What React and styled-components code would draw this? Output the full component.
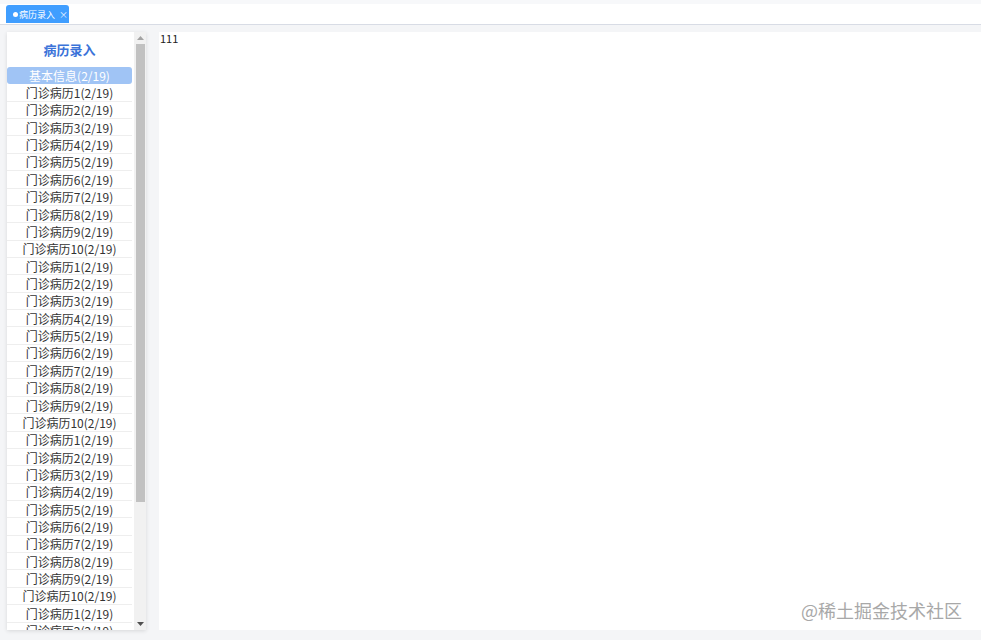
import React from 'react';
import styled, { createGlobalStyle } from 'styled-components';

const GlobalStyle = createGlobalStyle`
  html, body {
    margin: 0;
    padding: 0;
    background: #fff;
    font-family: "Noto Sans CJK SC", "Noto Sans", sans-serif;
  }
`;

const Page = styled.div`
  width: 981px;
  height: 640px;
  position: relative;
  overflow: hidden;
  display: flex;
  flex-direction: column;
`;

const TabBar = styled.div`
  height: 25px;
  box-sizing: border-box;
  padding: 1px 0 0 6px;
  border-top: 4px solid #f7f8fa;
  border-bottom: 1px solid #d8dce5;
  display: flex;
  align-items: flex-start;
  flex-shrink: 0;
`;

const Tab = styled.div`
  height: 18px;
  width: 63px;
  box-sizing: border-box;
  background: #409eff;
  color: #fff;
  border-radius: 3px 3px 0 0;
  display: flex;
  align-items: center;
  gap: 1px;
  padding-left: 7px;
  font-size: 9px;
  line-height: 1;
  white-space: nowrap;
  overflow: hidden;
`;

const Dot = styled.span`
  width: 5px;
  height: 5px;
  border-radius: 50%;
  background: #fff;
  flex-shrink: 0;
`;

const Close = styled.span`
  margin-left: 3px;
  font-size: 9px;
  opacity: 0.9;
`;

const Body = styled.div`
  flex: 1;
  background: #f4f5f7;
  display: flex;
  gap: 13px;
  padding: 7px 0 10px 7px;
  min-height: 0;
`;

const Sidebar = styled.div`
  width: 139px;
  background: #fff;
  box-shadow: 0 1px 4px rgba(0, 0, 0, 0.12);
  display: flex;
  overflow: hidden;
`;

const SideInner = styled.div`
  flex: 1;
  display: flex;
  flex-direction: column;
  overflow: hidden;
`;

const Title = styled.div`
  height: 34px;
  padding-bottom: 1px;
  display: flex;
  align-items: center;
  justify-content: center;
  color: #3b73d9;
  font-size: 13px;
  font-weight: 700;
  flex-shrink: 0;
`;

const List = styled.div`
  display: flex;
  flex-direction: column;
`;

const Item = styled.div`
  height: 17.36px;
  box-sizing: border-box;
  flex-shrink: 0;
  display: flex;
  align-items: center;
  justify-content: center;
  font-size: 12px;
  color: ${(p) => (p.$active ? '#fff' : '#333')};
  background: ${(p) => (p.$active ? '#a0c4f5' : 'transparent')};
  border-radius: ${(p) => (p.$active ? '3px' : '0')};
  border-bottom: 1px solid ${(p) => (p.$active ? 'transparent' : '#eeeeee')};
  white-space: nowrap;
`;

const ScrollTrack = styled.div`
  width: 12px;
  margin-left: 2px;
  background: #f1f1f1;
  display: flex;
  flex-direction: column;
  align-items: center;
  flex-shrink: 0;
`;

const Arrow = styled.div`
  height: 12px;
  width: 12px;
  display: flex;
  align-items: center;
  justify-content: center;
  flex-shrink: 0;
`;

const Thumb = styled.div`
  width: 9px;
  height: 458px;
  background: #c1c1c1;
`;

const Filler = styled.div`
  flex: 1;
`;

const Main = styled.div`
  flex: 1;
  background: #fff;
  padding: 0 0 0 1px;
  font-size: 11px;
  color: #222;
  line-height: 13px;
`;

const Watermark = styled.div`
  position: absolute;
  right: 19px;
  top: 597px;
  font-size: 18px;
  color: #a8a8a8;
  font-family: "Noto Sans CJK SC", sans-serif;
`;

const Triangle = ({ down }) => (
  <svg width="7" height="4" viewBox="0 0 7 4">
    <path d={down ? 'M0 0h7L3.5 4z' : 'M0 4h7L3.5 0z'} fill={down ? '#505050' : '#a3a3a3'} />
  </svg>
);

const items = ['基本信息(2/19)'];
for (let r = 0; r < 4; r++) {
  for (let i = 1; i <= 10; i++) items.push(`门诊病历${i}(2/19)`);
}

export default function App() {
  return (
    <>
      <GlobalStyle />
      <Page>
        <TabBar>
          <Tab>
            <Dot />
            病历录入
            <Close>×</Close>
          </Tab>
        </TabBar>
        <Body>
          <Sidebar>
            <SideInner>
              <Title>病历录入</Title>
              <List>
                {items.map((t, i) => (
                  <Item key={i} $active={i === 0}>
                    {t}
                  </Item>
                ))}
              </List>
            </SideInner>
            <ScrollTrack>
              <Arrow>
                <Triangle />
              </Arrow>
              <Thumb />
              <Filler />
              <Arrow>
                <Triangle down />
              </Arrow>
            </ScrollTrack>
          </Sidebar>
          <Main>111</Main>
        </Body>
        <Watermark>@稀土掘金技术社区</Watermark>
      </Page>
    </>
  );
}
